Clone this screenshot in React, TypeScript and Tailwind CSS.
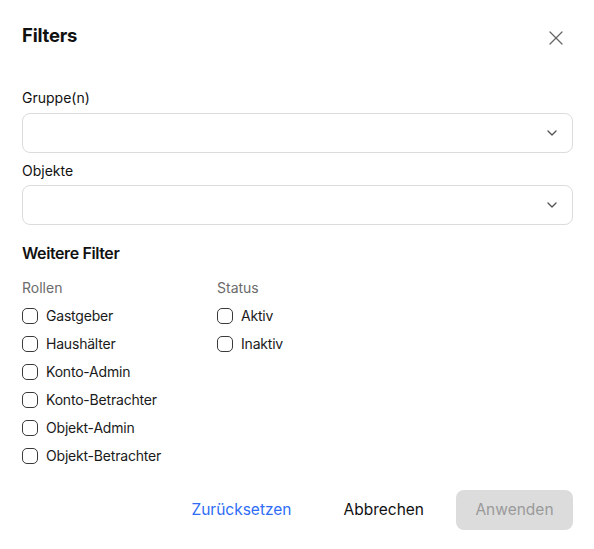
import { ChevronDown, X } from "lucide-react";

const roles = ["Gastgeber", "Haushälter", "Konto-Admin", "Konto-Betrachter", "Objekt-Admin", "Objekt-Betrachter"];
const statuses = ["Aktiv", "Inaktiv"];

function Select() {
    return (
        <div className="flex h-10 w-full items-center justify-end rounded-lg border border-[#dcdcdc] bg-white pr-3">
            <ChevronDown size={16} strokeWidth={2} className="text-[#555]" />
        </div>
    );
}

function Check({ label }: { label: string }) {
    return (
        <label className="flex h-7 items-center gap-2">
            <span className="h-4 w-4 rounded-[5px] border-[1.5px] border-[#3a3a3a] bg-white" />
            <span className="text-sm tracking-[-0.2px] text-[#1a1a1a]">{label}</span>
        </label>
    );
}

export default function App() {
    return (
        <div className="h-[549px] w-[594px] bg-white pl-[22px] pr-[21px] pt-[22px] font-['Inter',sans-serif] text-[#111]">
            <div className="flex h-7 items-center justify-between">
                <h2 className="text-[18.5px] font-bold tracking-[-0.2px]">Filters</h2>
                <button className="mr-[5px] mt-1 text-[#666]">
                    <X size={24} strokeWidth={1.3} />
                </button>
            </div>

            <div className="mt-[38px] text-sm leading-5">Gruppe(n)</div>
            <div className="mt-[5px]">
                <Select />
            </div>

            <div className="mt-2 text-sm leading-5">Objekte</div>
            <div className="mt-1">
                <Select />
            </div>

            <h3 className="mt-4 text-base font-semibold leading-6 tracking-tight">Weitere Filter</h3>

            <div className="mt-[13px] flex">
                <div className="w-[195px]">
                    <div className="text-sm leading-5 text-[#6b6b6b]">Rollen</div>
                    <div className="mt-1 flex flex-col">
                        {roles.map((r) => (
                            <Check key={r} label={r} />
                        ))}
                    </div>
                </div>
                <div>
                    <div className="text-sm leading-5 text-[#6b6b6b]">Status</div>
                    <div className="mt-1 flex flex-col">
                        {statuses.map((s) => (
                            <Check key={s} label={s} />
                        ))}
                    </div>
                </div>
            </div>

            <div className="mt-5 flex justify-end gap-3">
                <button className="h-10 rounded-lg px-5 text-[15.5px] text-[#2f6df6]">Zurücksetzen</button>
                <button className="h-10 rounded-lg px-5 text-[15.5px] text-[#111]">Abbrechen</button>
                <button className="h-10 w-[117px] rounded-lg bg-[#dcdcdc] text-[15.5px] text-[#9a9a9a]">Anwenden</button>
            </div>
        </div>
    );
}
